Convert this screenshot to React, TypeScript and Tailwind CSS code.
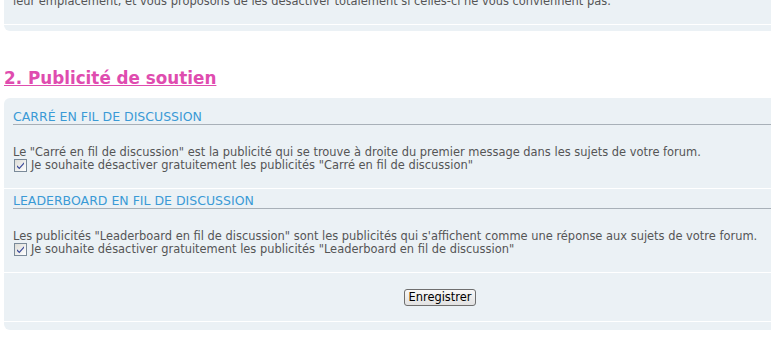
import React from "react";

const Check = () => (
  <span className="inline-flex items-center justify-center w-[13px] h-[13px] border border-[#7a8a99] bg-gradient-to-br from-[#dcdcd7] to-[#ffffff] align-middle mr-[4px] ml-[1px] shrink-0">
    <svg width="9" height="9" viewBox="0 0 9 9">
      <path d="M1 4.2 L3.3 6.6 L8 1.2 L8 3 L3.3 8.3 L1 6 Z" fill="#3b4a9a" />
    </svg>
  </span>
);

function Section({ title, text, label }: { title: string; text: string; label: string }) {
  return (
    <div className="border-b border-white pl-[9px] pt-[5px] pb-[16px]">
      <div className="text-[#3a9ad6] text-[12.5px] leading-[13px] border-b border-[#a8b0b8] pb-[1px]">{title}</div>
      <div className="pt-[21px] leading-[13px]">{text}</div>
      <div className="flex items-center leading-[13px]">
        <Check />
        <span>{label}</span>
      </div>
    </div>
  );
}

export default function App() {
  return (
    <div
      className="w-[771px] h-[339px] overflow-hidden bg-white text-[11.45px] text-[#555]"
      style={{ fontFamily: '"DejaVu Sans", Verdana, sans-serif' }}
    >
      <div className="ml-[4px] w-[880px] bg-[#ebf1f5] rounded-bl-[6px] mt-[-5px]">
        <div className="pl-[9px] leading-[13px] border-b border-white pb-[16px]">
          leur emplacement, et vous proposons de les désactiver totalement si celles-ci ne vous conviennent pas.
        </div>
        <div className="h-[6px]" />
      </div>
      <h2 className="ml-[4px] mt-[37px] text-[16.8px] font-bold text-[#df4caf] underline leading-[20px]">
        2. Publicité de soutien
      </h2>
      <div className="ml-[4px] mt-[10px] w-[872px] bg-[#ebf1f5] rounded-[6px] pt-[7px] pb-[8px]">
        <Section
          title="CARRÉ EN FIL DE DISCUSSION"
          text={'Le "Carré en fil de discussion" est la publicité qui se trouve à droite du premier message dans les sujets de votre forum.'}
          label={'Je souhaite désactiver gratuitement les publicités "Carré en fil de discussion"'}
        />
        <Section
          title="LEADERBOARD EN FIL DE DISCUSSION"
          text={'Les publicités "Leaderboard en fil de discussion" sont les publicités qui s\'affichent comme une réponse aux sujets de votre forum.'}
          label={'Je souhaite désactiver gratuitement les publicités "Leaderboard en fil de discussion"'}
        />
        <div className="border-b border-white h-[49px] flex items-center justify-center">
          <button className="h-[17px] px-[3px] border border-[#6f6f6f] rounded-[3px] bg-gradient-to-b from-[#f8f8f8] to-[#e2e2e2] text-black text-[11.45px] leading-[13px]">
            Enregistrer
          </button>
        </div>
      </div>
    </div>
  );
}
